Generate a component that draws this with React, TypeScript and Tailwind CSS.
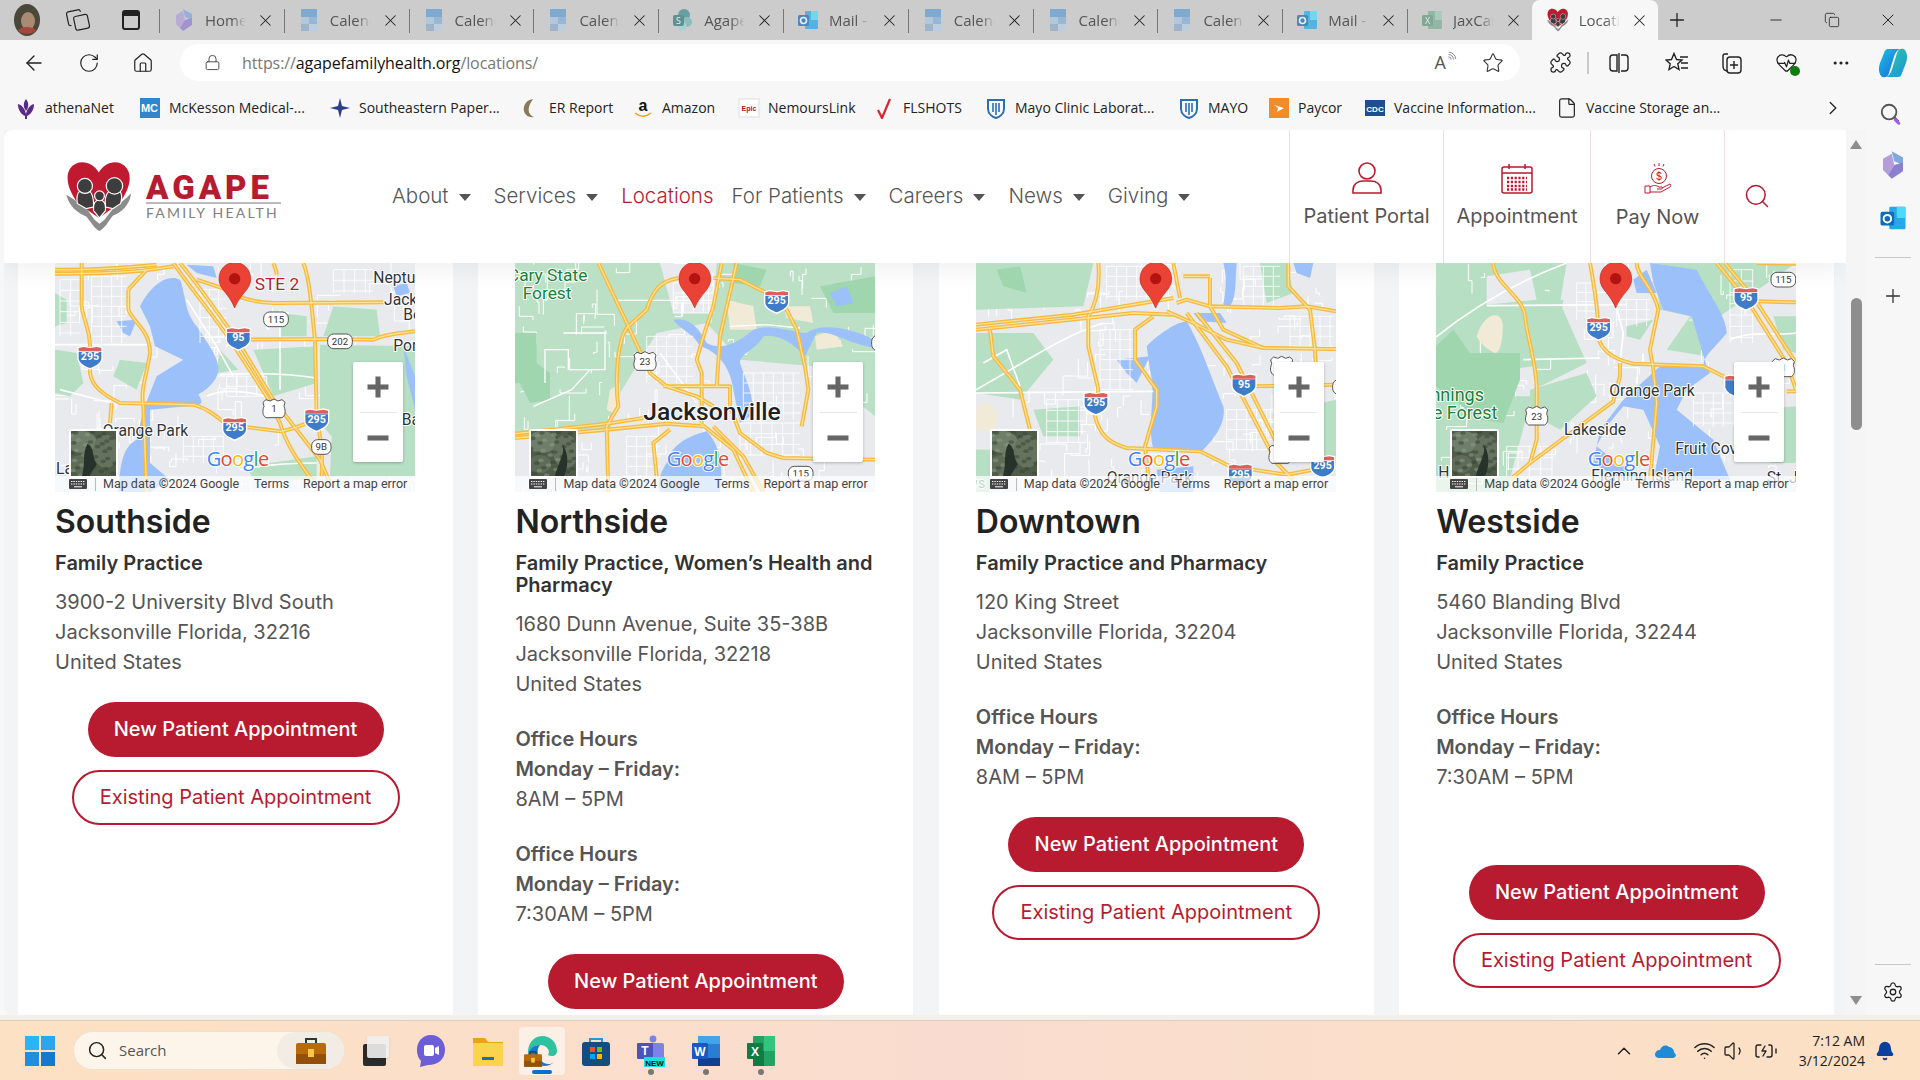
import {
  ArrowLeft,
  BatteryCharging,
  Bell,
  ChevronRight,
  ChevronUp,
  Copy,
  File,
  HeartPulse,
  Home,
  Lock,
  Minus,
  MoreHorizontal,
  Plus,
  Puzzle,
  RotateCw,
  Search,
  Settings,
  Star,
  Volume1,
  Wifi,
  X,
} from "lucide-react";

const RED = "#b81a30";

// --- browser chrome bits ---

function TabIcon({ kind }: { kind: string }) {
  if (kind === "calendar") {
    return (
      <svg width="20" height="24" viewBox="0 0 20 24">
        <rect x="2" y="1" width="16" height="8" fill="#5f9bd0" />
        <rect x="2" y="9" width="8" height="7" fill="#a9c6e0" />
        <rect x="10" y="9" width="8" height="7" fill="#7fb0d8" />
        <rect x="2" y="16" width="8" height="7" fill="#8fa9c8" />
        <rect x="10" y="16" width="8" height="7" fill="#b6d0e6" />
      </svg>
    );
  }
  if (kind === "copilot") {
    return (
      <svg width="20" height="24" viewBox="0 0 20 24">
        <path d="M9 1 L18 6 L18 12 L11 9Z" fill="#7fa8e0" />
        <path d="M2 7 L9 3 L11 12 L6 20 L2 16Z" fill="#b39ddb" />
        <path d="M11 12 L18 10 L18 17 L9 23 L6 20Z" fill="#8c7fd0" />
      </svg>
    );
  }
  if (kind === "sharepoint") {
    return (
      <svg width="22" height="24" viewBox="0 0 22 24">
        <circle cx="12" cy="7" r="6" fill="#3f8d8f" />
        <circle cx="15" cy="14" r="5" fill="#72b8b8" />
        <circle cx="10" cy="18" r="4.5" fill="#9ed3d2" />
        <rect x="1" y="7" width="11" height="11" rx="2" fill="#2d7a7c" />
        <text x="6.5" y="16" fontSize="9" fill="#fff" textAnchor="middle">S</text>
      </svg>
    );
  }
  if (kind === "mail") {
    return (
      <svg width="22" height="22" viewBox="0 0 22 22">
        <rect x="8" y="2" width="13" height="18" rx="1" fill="#28a8ea" />
        <rect x="14" y="2" width="7" height="9" fill="#50d9ff" />
        <rect x="1" y="6" width="11" height="11" rx="1.5" fill="#0f6cbd" />
        <circle cx="6.5" cy="11.5" r="3" fill="none" stroke="#fff" strokeWidth="1.6" />
      </svg>
    );
  }
  if (kind === "excel") {
    return (
      <svg width="22" height="22" viewBox="0 0 22 22" opacity="0.75">
        <rect x="7" y="2" width="14" height="18" rx="1" fill="#5fa584" />
        <rect x="14" y="2" width="7" height="9" fill="#8fc9a9" />
        <rect x="1" y="6" width="11" height="11" rx="1.5" fill="#3d8a65" />
        <text x="6.5" y="15" fontSize="9" fill="#fff" textAnchor="middle">X</text>
      </svg>
    );
  }
  return (
    <svg width="22" height="24" viewBox="50 60 200 220">
      <HeartMark />
    </svg>
  );
}

function HeartMark() {
  return (
    <>
      <path
        d="M148,98 C130,65 85,55 62,85 C45,110 55,150 85,190 L148,235 L210,190 C240,150 250,110 232,85 C210,55 165,65 148,98Z"
        fill="#c01a30"
      />
      <path d="M50,165 C72,178 92,192 112,208 L135,240 L150,252 L165,240 L190,208 C208,192 230,178 245,160 C242,195 216,218 190,228 C176,246 166,266 150,274 C134,266 124,246 110,230 C84,220 58,200 50,165Z" fill="#8b8b8b" />
      <g stroke="#fff" strokeWidth="7" fill="#3d3d3d" paintOrder="stroke">
        <path d="M85,190 C80,165 90,150 105,150 C122,150 132,168 130,200 L110,205Z" />
        <path d="M170,200 C165,168 178,150 195,150 C212,150 220,165 212,190 L190,205Z" />
        <circle cx="106" cy="138" r="21" />
        <circle cx="195" cy="138" r="23" />
        <path d="M134,212 C132,190 140,182 150,182 C160,182 168,190 166,212 L150,232Z" />
        <circle cx="150" cy="168" r="13" />
      </g>
    </>
  );
}

function BrowserTab({ label, kind, active }: { label: string; kind: string; active?: boolean }) {
  return (
    <div
      className={
        active
          ? "flex items-center h-[40px] w-[126px] pl-[15px] bg-[#f7f7f7] rounded-t-[8px]"
          : "flex items-center h-[40px] w-[124.8px] pl-[14px] relative"
      }
    >
      {!active && <span className="absolute left-0 top-[9px] h-[24px] w-px bg-[#777]" />}
      <span className={active ? "w-[22px] flex justify-center" : "w-[22px] flex justify-center opacity-70"}>
        <TabIcon kind={kind} />
      </span>
      <span className="ml-[10px] w-[41px] overflow-hidden whitespace-nowrap text-[15px] text-[#555] [mask-image:linear-gradient(to_right,black_65%,transparent)]">
        {label}
      </span>
      <X size={19} strokeWidth={1.3} className="ml-[10px] text-[#222] shrink-0" />
    </div>
  );
}

function TabBar() {
  const tabs = [
    ["Home", "copilot"],
    ["Calendar", "calendar"],
    ["Calendar", "calendar"],
    ["Calendar", "calendar"],
    ["Agape Family", "sharepoint"],
    ["Mail - Front", "mail"],
    ["Calendar", "calendar"],
    ["Calendar", "calendar"],
    ["Calendar", "calendar"],
    ["Mail - Front", "mail"],
    ["JaxCare", "excel"],
  ];
  return (
    <div className="flex items-center h-[40px] bg-[#cccccc] shrink-0">
      <div className="flex items-center w-[159px] pl-[14px]">
        <svg width="26" height="32" viewBox="0 0 26 32" className="shrink-0">
          <ellipse cx="13" cy="16" rx="13" ry="16" fill="#4a4838" />
          <ellipse cx="14" cy="17" rx="7" ry="9" fill="#a98a72" />
          <path d="M4 26 C8 22 18 22 22 26 C20 31 6 31 4 26Z" fill="#a5463f" />
        </svg>
        <Copy size={24} strokeWidth={1.2} className="ml-[26px] text-[#222] -rotate-12" />
        <div className="ml-[32px] w-[18px] h-[20px] rounded-[3px] border-2 border-[#222] border-t-[6px]" />
      </div>
      {tabs.map((t, i) => (
        <BrowserTab key={i} label={t[0]} kind={t[1]} />
      ))}
      <BrowserTab label="Locations" kind="heart" active />
      <Plus size={22} strokeWidth={1.4} className="ml-[8px] text-[#222]" />
      <Minus size={18} strokeWidth={1.2} className="ml-[79px] text-[#222]" />
      <Copy size={16} strokeWidth={1.2} className="ml-[39px] text-[#222]" />
      <X size={20} strokeWidth={1.2} className="ml-[38px] text-[#222]" />
    </div>
  );
}

function ToolbarSlot({ w, children }: { w: string; children: React.ReactNode }) {
  return <div className={`flex justify-center ${w}`}>{children}</div>;
}

function Toolbar() {
  return (
    <div className="flex items-center h-[45px] bg-[#f7f7f7] shrink-0">
      <div className="flex items-center w-[180px] pl-[22px] gap-[32px] text-[#222]">
        <ArrowLeft size={24} strokeWidth={1.4} />
        <RotateCw size={22} strokeWidth={1.3} />
        <Home size={22} strokeWidth={1.3} />
      </div>
      <div className="flex items-center w-[1340px] h-[37px] rounded-full bg-white">
        <Lock size={17} strokeWidth={1.3} className="ml-[24px] text-[#444]" />
        <span className="ml-[21px] text-[16px] font-['Open_Sans',sans-serif] tracking-[-0.1px]">
          <span className="text-[#777]">https://</span>
          <span className="text-[#111]">agapefamilyhealth.org</span>
          <span className="text-[#777]">/locations/</span>
        </span>
        <span className="ml-auto text-[18px] text-[#555] font-['Open_Sans',sans-serif]">A</span>
        <Wifi size={11} strokeWidth={1.4} className="rotate-45 -mt-[12px] text-[#555]" />
        <Star size={22} strokeWidth={1.2} className="ml-[25px] mr-[16px] text-[#333]" />
      </div>
      <div className="flex items-center ml-[13px] text-[#222]">
        <ToolbarSlot w="w-[54px]">
          <Puzzle size={23} strokeWidth={1.3} />
        </ToolbarSlot>
        <span className="w-[2px] h-[22px] bg-[#c9c9c9]" />
        <ToolbarSlot w="w-[60px]">
          <svg width="22" height="22" viewBox="0 0 22 22" fill="none" stroke="#222" strokeWidth="1.4">
            <path d="M9 3 H5 a3 3 0 0 0 -3 3 V16 a3 3 0 0 0 3 3 H9Z M13 3 H17 a3 3 0 0 1 3 3 V16 a3 3 0 0 1 -3 3 H13 M11 1 V21" />
          </svg>
        </ToolbarSlot>
        <ToolbarSlot w="w-[55px]">
          <svg width="24" height="22" viewBox="0 0 24 22" fill="none" stroke="#222" strokeWidth="1.4">
            <path d="M9 1.5 L11.5 7.5 L17 8 L12.8 11.8 L14 17.5 L9 14.5 L4 17.5 L5.2 11.8 L1 8 L6.5 7.5Z" />
            <path d="M15 5 H23 M16 11 H23 M16 16 H23" />
          </svg>
        </ToolbarSlot>
        <ToolbarSlot w="w-[55px]">
          <svg width="24" height="24" viewBox="0 0 24 24" fill="none" stroke="#222" strokeWidth="1.4">
            <path d="M8 3 H5 a2 2 0 0 0 -2 2 V15 a5 5 0 0 0 4 5" />
            <rect x="7" y="6" width="14" height="16" rx="3" />
            <path d="M14 10 V18 M10 14 H18" />
          </svg>
        </ToolbarSlot>
        <ToolbarSlot w="w-[55px]">
          <div className="relative">
            <HeartPulse size={23} strokeWidth={1.3} />
            <span className="absolute -right-[2px] -bottom-[2px] w-[10px] h-[10px] rounded-full bg-[#107c10]" />
          </div>
        </ToolbarSlot>
        <ToolbarSlot w="w-[53px]">
          <MoreHorizontal size={20} strokeWidth={1.8} />
        </ToolbarSlot>
        <ToolbarSlot w="w-[52px]">
          <svg width="32" height="32" viewBox="0 0 32 32">
            <defs>
              <linearGradient id="cop-a" x1="0" y1="0" x2="1" y2="1">
                <stop offset="0" stopColor="#19c3e6" />
                <stop offset="1" stopColor="#1b5fd6" />
              </linearGradient>
              <linearGradient id="cop-b" x1="0" y1="0" x2="1" y2="1">
                <stop offset="0" stopColor="#2fd29b" />
                <stop offset="1" stopColor="#1b8fe0" />
              </linearGradient>
            </defs>
            <path d="M11 2 H24 C20 2 18 6 16 13 L12 26 C11 30 8 31 5 30 C2 27 1 22 3 16 L7 6 C8 3 9 2 11 2Z" fill="url(#cop-a)" />
            <path d="M21 30 H8 C12 30 14 26 16 19 L20 6 C21 2 24 1 27 2 C30 5 31 10 29 16 L25 26 C24 29 23 30 21 30Z" fill="url(#cop-b)" />
          </svg>
        </ToolbarSlot>
      </div>
    </div>
  );
}

function Bookmarks() {
  const icon = (n: string) => {
    switch (n) {
      case "athena":
        return <path d="M11 2 C8 6 8 10 11 14 C14 10 14 6 11 2Z M3 7 C3 13 6 17 10 19 L10 22 H12 L12 19 C16 17 19 13 19 7 C15 8 12 12 11 17 C10 12 7 8 3 7Z" fill="#5b2a86" />;
      case "mc":
        return (
          <>
            <rect x="1" y="1" width="20" height="20" fill="#2f86cf" />
            <text x="10.5" y="15" fontSize="11" fontWeight="700" fill="#fff" textAnchor="middle">MC</text>
          </>
        );
      case "se":
        return <path d="M11 1 L13 9 L21 11 L13 13 L11 21 L9 13 L1 11 L9 9Z" fill="#2c3e8c" />;
      case "er":
        return <path d="M14 2 C6 3 4 10 5 14 C6 18 10 21 15 20 C10 18 9 14 10 10 C11 6 13 4 14 2Z" fill="#8a7a55" />;
      case "az":
        return (
          <>
            <text x="11" y="14" fontSize="16" fontWeight="700" fill="#111" textAnchor="middle">a</text>
            <path d="M3 16 C8 20 14 20 19 16" stroke="#f39c12" strokeWidth="1.6" fill="none" />
          </>
        );
      case "epic":
        return (
          <>
            <rect x="1" y="2" width="20" height="18" fill="#fff" stroke="#ddd" />
            <text x="11" y="14" fontSize="7" fontWeight="700" fill="#b5121b" textAnchor="middle">Epic</text>
          </>
        );
      case "fl":
        return <path d="M17 2 L9 21 L5 13" fill="none" stroke="#d9232e" strokeWidth="2.2" />;
      case "mayo":
        return (
          <>
            <path d="M3 3 H19 V12 C19 17 14 20 11 21 C8 20 3 17 3 12Z" fill="none" stroke="#2a6fb5" strokeWidth="2" />
            <path d="M8 6 V15 M11 6 V18 M14 6 V15" stroke="#2a6fb5" strokeWidth="1.6" />
          </>
        );
      case "paycor":
        return (
          <>
            <rect x="1" y="1" width="20" height="20" fill="#f28c28" />
            <path d="M6 8 L16 11 L9 15 L10 11Z" fill="#fff" />
          </>
        );
      default:
        return (
          <>
            <rect x="1" y="3" width="20" height="16" fill="#1b4f91" />
            <text x="11" y="14.5" fontSize="8" fontWeight="700" fill="#fff" textAnchor="middle">CDC</text>
          </>
        );
    }
  };
  const items: [string, string, string][] = [
    ["athena", "athenaNet", "w-[124px]"],
    ["mc", "McKesson Medical-...", "w-[190px]"],
    ["se", "Southeastern Paper...", "w-[190px]"],
    ["er", "ER Report", "w-[113px]"],
    ["az", "Amazon", "w-[106px]"],
    ["epic", "NemoursLink", "w-[135px]"],
    ["fl", "FLSHOTS", "w-[112px]"],
    ["mayo", "Mayo Clinic Laborat...", "w-[193px]"],
    ["mayo", "MAYO", "w-[90px]"],
    ["paycor", "Paycor", "w-[96px]"],
    ["cdc", "Vaccine Information...", "w-[192px]"],
  ];
  return (
    <div className="flex items-center h-[45px] pl-[15px] bg-[#f7f7f7] shrink-0 text-[14px] text-[#222] font-['Open_Sans',sans-serif]">
      {items.map(([k, label, w], i) => (
        <div key={i} className={`flex items-center gap-[8px] whitespace-nowrap ${w}`}>
          <svg width="22" height="22" viewBox="0 0 22 22" className="shrink-0 font-['Liberation_Sans',sans-serif]">
            {icon(k)}
          </svg>
          <span>{label}</span>
        </div>
      ))}
      <div className="flex items-center gap-[8px] whitespace-nowrap w-[266px]">
        <File size={22} strokeWidth={1.3} className="shrink-0" />
        <span>Vaccine Storage an...</span>
      </div>
      <ChevronRight size={22} strokeWidth={1.4} />
      <div className="ml-[35px] mt-[10px] relative">
        <Search size={22} strokeWidth={2} className="text-[#555]" />
        <span className="absolute right-0 bottom-[1px] w-[8px] h-[3px] rotate-45 rounded-full bg-[#a855f7]" />
      </div>
    </div>
  );
}

// --- map drawings, coordinates are in a 3x space to match the source crops ---

function grid(x1: number, y1: number, x2: number, y2: number, step: number) {
  let d = "";
  for (let x = x1; x <= x2; x += step) d += `M${x},${y1}V${y2}`;
  for (let y = y1; y <= y2; y += step) d += `M${x1},${y}H${x2}`;
  return d;
}

// small stable pseudo random walk of side streets, gives the map its texture
function scatter(seed: number, x0: number, count: number) {
  let s = seed;
  const next = (n: number) => {
    s = (s * 1103515245 + 12345) & 0x7fffffff;
    return (s >> 8) % n;
  };
  let d = "";
  for (let i = 0; i < count; i++) {
    let x = x0 + next(1080);
    let y = 40 + next(687);
    d += `M${x},${y}`;
    for (let k = 0; k < 3; k++) {
      x += next(90) - 45;
      y += next(90) - 45;
      d += k % 2 ? `H${x}` : `V${y}`;
    }
  }
  return d;
}

function Streets({ seed, x0, count = 110 }: { seed: number; x0: number; count?: number }) {
  return <path d={scatter(seed, x0, count)} stroke="#fff" strokeWidth="3" fill="none" />;
}

function Interstate({ x, y, n }: { x: number; y: number; n: string }) {
  return (
    <g transform={`translate(${x} ${y})`}>
      <path d="M-38,-30 L-20,-34 L0,-30 L20,-34 L38,-30 L38,5 C36,24 14,32 0,38 C-14,32 -36,24 -38,5Z" fill="#fff" />
      <path d="M-34,-16 H34 V5 C32,20 12,28 0,33 C-12,28 -32,20 -34,5Z" fill="#3e7bc9" />
      <path d="M-34,-27 L-20,-30 L0,-27 L20,-30 L34,-27 V-18 H-34Z" fill="#d9605b" />
      <text y="9" textAnchor="middle" fontSize="32" fontWeight="700" fill="#fff">{n}</text>
    </g>
  );
}

function Oval({ x, y, n, w }: { x: number; y: number; n: string; w: number }) {
  return (
    <g transform={`translate(${x} ${y})`}>
      <rect x={-w / 2} y="-22" width={w} height="44" rx="18" fill="#fff" stroke="#555" strokeWidth="3" />
      <text y="10" textAnchor="middle" fontSize="29" fill="#333">{n}</text>
    </g>
  );
}

function UsShield({ x, y, n }: { x: number; y: number; n: string }) {
  return (
    <g transform={`translate(${x} ${y})`}>
      <path d="M-24,-28 L-12,-24 L0,-30 L12,-24 L24,-28 L33,-20 L30,-8 C36,8 34,20 24,26 L-24,26 C-34,20 -36,8 -30,-8 L-33,-20Z" fill="#fff" stroke="#555" strokeWidth="3" />
      <text y="10" textAnchor="middle" fontSize="29" fill="#333">{n}</text>
    </g>
  );
}

function MapLabel({
  x,
  y,
  t,
  size = 47,
  fill = "#2f3437",
  weight = 400,
  anchor = "start",
}: {
  x: number;
  y: number;
  t: string;
  size?: number;
  fill?: string;
  weight?: number;
  anchor?: "start" | "end";
}) {
  return (
    <text x={x} y={y} fontSize={size} fill={fill} fontWeight={weight} textAnchor={anchor} stroke="#fff" strokeWidth="6" paintOrder="stroke" strokeLinejoin="round">
      {t}
    </text>
  );
}

function GoogleMark({ x }: { x: number }) {
  return (
    <text x={x} y="650" fontSize="60" stroke="#fff" strokeWidth="6" paintOrder="stroke" fontFamily="'Open Sans', sans-serif" letterSpacing="-2">
      <tspan fill="#4285f4">G</tspan>
      <tspan fill="#ea4335">o</tspan>
      <tspan fill="#fbbc05">o</tspan>
      <tspan fill="#4285f4">g</tspan>
      <tspan fill="#34a853">l</tspan>
      <tspan fill="#ea4335">e</tspan>
    </text>
  );
}

function Satellite({ variant }: { variant: number }) {
  const blobs = Array.from({ length: 36 }, (_, i) => ({
    x: (i * 17 + variant * 7) % 49,
    y: (i * 29 + 5) % 49,
    light: i % 3 === 0,
  }));
  return (
    <svg viewBox="0 0 49 49" className="w-full h-full block">
      <rect width="49" height="49" fill="#4f5c48" />
      <ellipse cx="12" cy="12" rx="16" ry="12" fill="#6f7e68" />
      <ellipse cx="38" cy="22" rx="14" ry="18" fill="#65735e" />
      <ellipse cx="10" cy="36" rx="12" ry="10" fill="#5e6c57" />
      {blobs.map((b, i) => (
        <ellipse key={i} cx={b.x} cy={b.y} rx="3" ry="2" fill={b.light ? "#8b9a84" : "#39453a"} opacity="0.55" />
      ))}
      {variant === 0 ? (
        <path d="M18 14 C26 18 22 28 28 36 L20 49 L12 49 C16 36 12 24 18 14Z" fill="#27322a" />
      ) : (
        <path d="M34 14 C38 24 30 34 26 49 L36 49 C42 36 40 22 34 14Z" fill="#27322a" />
      )}
    </svg>
  );
}

type MapProps = {
  origin: number;
  base?: string;
  thumb: number;
  children: React.ReactNode;
};

function MapShell({ origin, base = "#e8eaed", thumb, children }: MapProps) {
  return (
    <div className="relative z-20 h-[229px] w-[360px] overflow-hidden font-['Roboto',sans-serif]">
      <svg viewBox={`${origin} 40 1080 687`} className="absolute inset-0 w-[360px] h-[229px]" fontFamily="Roboto, sans-serif">
        <rect x={origin} y="40" width="1080" height="687" fill={base} />
        {children}
        <path
          d={`M${origin + 539},175 C${origin + 522},130 ${origin + 492},120 ${origin + 492},88 C${origin + 492},60 ${origin + 512},38 ${origin + 539},38 C${origin + 566},38 ${origin + 587},60 ${origin + 587},88 C${origin + 587},120 ${origin + 557},130 ${origin + 539},175Z`}
          fill="#ea4335"
          stroke="#c5221f"
          strokeWidth="2"
        />
        <circle cx={origin + 539} cy="87" r="17" fill="#b31412" />
      </svg>

      <div className="absolute left-[14px] top-[166px] w-[49px] h-[49px] border-2 border-white rounded-[2px] overflow-hidden">
        <Satellite variant={thumb} />
      </div>

      <div className="absolute left-[298px] top-[99px] w-[50px] h-[100px] bg-white rounded-[2px] shadow-[0_1px_3px_rgba(0,0,0,0.25)] flex flex-col items-center text-[#666]">
        <div className="h-[50px] flex items-center justify-center">
          <Plus size={36} strokeWidth={3.4} strokeLinecap="butt" />
        </div>
        <span className="w-[37px] h-px bg-[#e6e6e6]" />
        <div className="h-[49px] flex items-center justify-center">
          <Minus size={36} strokeWidth={3.4} strokeLinecap="butt" />
        </div>
      </div>

      <div className="absolute left-0 right-0 bottom-0 h-[16px] bg-white/70 flex items-center pl-[14px] text-[12.5px] text-[#444] whitespace-nowrap">
        <svg width="18" height="10" viewBox="0 0 18 10" className="shrink-0">
          <rect width="18" height="10" rx="1" fill="#444" />
          <path d="M2 2.5H16M2 5H16" stroke="#fff" strokeWidth="1" strokeDasharray="1.4 1" />
          <path d="M5 7.8H13" stroke="#fff" strokeWidth="1" />
        </svg>
        <span className="ml-[8px] w-px h-[13px] bg-[#bbb]" />
        <span className="ml-[7px] w-[151px]">Map data ©2024 Google</span>
        <span className="w-[49px]">Terms</span>
        <span>Report a map error</span>
      </div>
    </div>
  );
}

function Highways({ paths }: { paths: string[] }) {
  return (
    <g fill="none" strokeLinejoin="round">
      {paths.map((d, i) => (
        <path key={`o${i}`} d={d} stroke="#f7b93e" strokeWidth="12" />
      ))}
      {paths.map((d, i) => (
        <path key={`i${i}`} d={d} stroke="#fde293" strokeWidth="4" />
      ))}
    </g>
  );
}

const PARK = "#b7dfc3";
const WATER = "#9cc0f9";
const SAND = "#f0ead6";

function SouthsideMap() {
  return (
    <MapShell origin={45} thumb={0}>
      <Streets seed={11} x0={45} />
      <g fill={PARK}>
        <path d="M840,285 L1125,290 L1125,680 L870,680 L875,560 L840,520Z" />
        <path d="M45,300 L110,310 L130,400 L90,440 L45,430Z" />
        <path d="M640,300 L820,290 L830,400 L700,440Z" />
        <path d="M240,330 L320,340 L290,420 L220,380Z" />
        <path d="M880,170 L1010,180 L1020,260 L850,260Z" />
        <path d="M720,190 L800,200 L800,260 L720,260Z" />
        <path d="M620,650 L830,620 L830,690 L640,690Z" />
        <path d="M45,130 L80,150 L80,220 L45,230Z" />
        <path d="M540,300 L595,360 L530,370Z" />
      </g>
      <g fill={WATER}>
        <path d="M300,170 C330,110 380,70 420,90 C440,140 430,180 470,230 C510,290 530,320 535,350 C540,390 500,420 475,435 C500,470 470,465 440,470 L330,480 C330,540 330,570 330,640 L390,690 L330,727 L235,727 C240,640 250,590 290,570 L310,480 L350,380 L430,330 L345,290 L330,230Z" />
        <path d="M440,45 L520,50 L530,85 L470,70Z" />
        <path d="M230,215 L290,210 L270,260 L250,250Z" />
        <path d="M1090,290 L1125,380 L1125,480 L1100,380Z" />
        <path d="M1060,110 L1100,100 L1110,130 L1070,140Z" />
      </g>
      <path d={`${grid(155, 80, 260, 280, 30)}${grid(480, 120, 560, 280, 28)}${grid(560, 380, 680, 440, 30)}${grid(430, 560, 550, 640, 30)}${grid(880, 60, 1000, 130, 32)}${grid(60, 90, 120, 260, 32)}`} stroke="#fff" strokeWidth="2.5" fill="none" />
      <path d="M45,285 H330 M540,375 C640,370 740,370 830,385 M60,420 L215,460 M500,440 C540,420 600,420 680,440 M720,180 V420 M440,150 L530,290 L580,380 M600,660 C700,640 800,640 830,640" stroke="#fff" strokeWidth="5" fill="none" />
      <Highways
        paths={[
          "M45,72 C120,72 250,70 330,60 L400,50",
          "M45,60 C130,62 250,55 350,45",
          "M125,40 L125,170 C130,210 150,240 150,290 L150,370 C155,410 190,435 240,460 L460,465 C500,475 530,500 560,525 L720,545 C760,540 790,525 825,510",
          "M420,40 C470,100 520,170 590,270 L700,450 L840,630 L870,700",
          "M400,40 C440,100 500,170 570,270 L680,440 L720,520 C740,590 780,640 815,690",
          "M470,90 L560,120 C600,150 650,158 700,160 L1030,158",
          "M790,40 C810,90 815,180 825,270 L830,510 C840,550 850,600 845,680",
          "M620,270 L860,268 L1000,270 C1040,250 1100,250 1125,245",
          "M265,120 L265,180 C280,220 330,240 330,310 C320,380 300,420 310,470 L320,727",
          "M320,60 L265,120",
          "M215,460 L210,520",
          "M700,40 C705,55 710,60 710,75",
        ]}
      />
      <Interstate x={150} y={322} n="295" />
      <Interstate x={595} y={266} n="95" />
      <Interstate x={584} y={536} n="295" />
      <Interstate x={830} y={510} n="295" />
      <Oval x={708} y={209} n="115" w={74} />
      <Oval x={900} y={275} n="202" w={74} />
      <Oval x={844} y={592} n="9B" w={58} />
      <UsShield x={702} y={478} n="1" />
      <MapLabel x={644} y={120} t="STE 2" size={52} fill="#b3202c" />
      <MapLabel x={1000} y={100} t="Neptune" />
      <MapLabel x={1032} y={165} t="Jack" />
      <MapLabel x={1090} y={210} t="Beach" />
      <MapLabel x={1060} y={305} t="Port" />
      <MapLabel x={1085} y={525} t="Bal" />
      <MapLabel x={188} y={560} t="Orange Park" />
      <MapLabel x={48} y={672} t="Lake" />
      <GoogleMark x={500} />
    </MapShell>
  );
}

function NorthsideMap() {
  return (
    <MapShell origin={45} base="#bbe0c6" thumb={1}>
      <g fill="#e8eaed">
        <path d="M360,430 L470,250 L620,220 L720,330 L940,350 L1125,500 L1125,727 L45,727 L45,560 L330,540Z" />
        <path d="M480,40 L650,40 L640,190 L520,190Z" />
      </g>
      <Streets seed={23} x0={45} count={90} />
      <g fill="#9fd6ae">
        <path d="M45,250 L110,250 L110,340 L150,370 L150,450 L90,460 L60,400 L45,400Z" />
        <path d="M700,40 L800,60 L780,110 L700,100Z" />
        <path d="M960,110 L1125,80 L1125,190 L1000,190Z" />
      </g>
      <g fill={SAND}>
        <path d="M680,150 L760,170 L770,240 L690,240Z" />
        <path d="M850,170 L930,170 L940,220 L860,205Z" />
        <path d="M945,260 L1000,240 L1030,290 L950,300Z" />
        <path d="M330,420 L360,400 L360,500 L320,480Z" />
      </g>
      <g fill={WATER}>
        <path d="M520,210 C570,200 600,240 620,280 C660,300 700,290 760,240 C820,220 880,250 920,250 C960,220 1040,230 1125,270 L1125,295 C1040,280 990,240 950,250 L915,320 C880,280 830,250 790,260 C770,300 720,310 720,340 C740,400 770,450 750,500 L720,520 L700,420 C690,340 640,300 600,290 C580,250 540,240 520,210Z" />
        <path d="M500,640 C510,590 560,560 620,545 C660,590 670,640 660,727 L480,727 C470,700 480,670 500,640Z" />
        <path d="M990,130 L1040,110 L1060,160 L1010,170Z" />
      </g>
      <path d={`${grid(440, 260, 580, 400, 30)}${grid(730, 370, 900, 510, 30)}${grid(380, 560, 480, 680, 30)}${grid(720, 520, 900, 620, 32)}${grid(520, 100, 640, 190, 30)}`} stroke="#fff" strokeWidth="2.5" fill="none" />
      <path d="M350,152 H640 M690,230 L800,225 L900,235 M190,250 H315 V360 H205 L205,300 H135 V400 M100,470 L215,420 L270,360 M480,310 L590,460" stroke="#fff" strokeWidth="4" fill="none" />
      <Highways
        paths={[
          "M45,552 L320,522 L430,505",
          "M45,565 L320,540 L500,522 L610,530",
          "M295,40 L385,230 L450,370 L500,410 L590,440 L640,470",
          "M535,85 C480,95 460,120 440,180 L380,235 C350,280 345,400 355,470 L320,530 L325,727",
          "M640,85 L720,90 L800,130 L860,180 L890,240 L915,350 L925,420 L905,530",
          "M665,40 L640,170 L610,260 L590,330 L605,370 L605,520",
          "M710,40 L660,260 L650,410",
          "M490,410 L690,410 L690,470 L720,550 L800,610 L850,625 L1125,630",
          "M600,520 L700,600 L760,727",
          "M510,540 L460,580 L470,680",
          "M640,530 L730,620 L790,727",
        ]}
      />
      <Interstate x={830} y={155} n="295" />
      <UsShield x={435} y={336} n="23" />
      <Oval x={902} y={672} n="115" w={74} />
      <Oval x={1130} y={280} n="1" w={30} />
      <MapLabel x={262} y={95} t="Cary State" size={52} fill="#188038" anchor="end" />
      <MapLabel x={68} y={149} t="Forest" size={52} fill="#188038" />
      <MapLabel x={430} y={512} t="Jacksonville" size={74} fill="#202124" weight={500} />
      <GoogleMark x={500} />
    </MapShell>
  );
}

function DowntownMap() {
  return (
    <MapShell origin={48} thumb={0}>
      <Streets seed={37} x0={48} />
      <g fill={PARK}>
        <path d="M48,40 L400,40 L370,170 L48,180Z" />
        <path d="M48,250 L220,250 L280,330 L180,450 L48,430Z" />
        <path d="M220,480 L360,470 L360,560 L250,560Z" />
        <path d="M1000,480 L1128,450 L1128,640 L1050,640Z" />
        <path d="M48,600 L90,600 L90,727 L48,727Z" />
        <path d="M900,40 L980,40 L1000,130 L920,160Z" />
        <path d="M610,430 L640,430 L620,470Z" />
      </g>
      <path d="M110,60 L180,50 L200,130 L130,110Z" fill="#9fd6ae" />
      <path d="M48,480 C60,460 80,450 100,470 C120,510 110,540 90,545 L48,540Z" fill={SAND} />
      <g fill={WATER}>
        <path d="M560,290 C590,260 640,220 680,215 C720,280 760,400 790,470 C800,520 760,570 730,600 L700,610 L580,597 C560,520 590,440 570,360Z" />
        <path d="M590,660 L700,650 L700,727 L600,727Z" />
        <path d="M790,40 L830,40 C825,100 830,140 810,170 L790,165 C800,110 800,80 790,40Z" />
        <path d="M700,190 L780,190 L800,220 L720,215Z" />
        <path d="M1000,40 L1060,40 L1050,85 L1010,70Z" />
        <path d="M470,330 L570,320 L530,400 L500,370Z" />
      </g>
      <path d={`${grid(440, 50, 640, 150, 30)}${grid(850, 50, 960, 170, 30)}${grid(420, 240, 520, 420, 30)}${grid(260, 450, 380, 580, 32)}${grid(800, 480, 950, 600, 30)}${grid(990, 200, 1120, 290, 30)}`} stroke="#fff" strokeWidth="2.5" fill="none" />
      <path d="M48,430 L580,425 M48,420 C160,360 300,260 430,220 M70,340 L140,300 L180,410 M880,510 L960,520" stroke="#fff" strokeWidth="5" fill="none" />
      <Highways
        paths={[
          "M48,225 L340,195 L640,145",
          "M48,240 L380,205 L520,190 L640,195",
          "M415,40 C420,100 410,160 385,200 L385,290 L415,420 L405,500 C420,560 450,580 500,595 L720,605 L810,650 L980,675 L1060,660",
          "M650,160 L680,150 L750,170 L960,175 L1040,170 L1128,185",
          "M985,40 L985,110 L1050,180 L1065,300 L1070,400 L1090,660",
          "M620,185 L700,220 L800,270 L910,295 L1128,298",
          "M680,190 L800,350 L950,640 L1000,690",
          "M710,190 L830,340 L980,640",
          "M90,240 L100,320 L180,420 L210,540",
          "M580,200 L525,240 L525,330 L590,420 L590,470 L555,590 L570,727",
          "M750,170 L790,240 L910,295",
          "M880,410 L1128,405",
          "M640,40 L660,145 M750,85 L750,170 M670,80 H750",
        ]}
      />
      <Interstate x={408} y={460} n="295" />
      <Interstate x={852} y={405} n="95" />
      <Interstate x={841} y={675} n="295" />
      <Interstate x={1088} y={650} n="295" />
      <UsShield x={965} y={350} n="1" />
      <UsShield x={960} y={615} n="1" />
      <Oval x={1135} y={412} n="2" w={34} />
      <MapLabel x={440} y={700} t="Orange Park" />
      <MapLabel x={20} y={716} t="ws" size={44} fill="#188038" />
      <GoogleMark x={503} />
    </MapShell>
  );
}

function WestsideMap() {
  return (
    <MapShell origin={48} base="#b7dfc3" thumb={1}>
      <g fill="#e8eaed">
        <path d="M440,40 L700,40 L720,180 L810,200 L740,300 L860,320 L900,200 L1128,40 L1128,727 L260,727 L340,420 L500,340 L420,160Z" />
        <path d="M200,80 L330,60 L350,150 L200,165Z" />
        <path d="M260,360 L340,350 L350,440 L290,440Z" />
      </g>
      <Streets seed={53} x0={48} count={70} />
      <g fill="#9fd6ae">
        <path d="M48,290 L100,240 L150,310 L300,310 L300,390 L250,520 L180,510 L48,410Z" />
      </g>
      <g fill={PARK}>
        <path d="M370,160 L430,150 L420,220 L370,210Z" />
        <path d="M620,230 L700,210 L660,270 L620,260Z" />
        <path d="M330,420 L500,370 L530,440 L420,540 L330,490Z" />
        <path d="M1060,200 L1128,200 L1128,310 L1090,300Z" />
        <path d="M960,480 L1128,470 L1128,640 L1050,640Z" />
      </g>
      <path d="M170,260 C190,190 240,180 248,220 C250,270 240,310 225,310 C200,300 180,280 170,260Z" fill={SAND} />
      <g fill={WATER}>
        <path d="M690,40 L830,60 C870,140 920,200 920,250 C880,300 860,310 850,340 L870,370 L800,420 L770,480 L880,570 L930,690 L700,690 L720,590 L670,480 L610,470 L560,530 L530,590 L590,640 L690,690 L600,690 L520,640 L540,540 L610,450 L720,350 L860,350 L815,200 L730,180 L700,100Z" />
        <path d="M640,90 L680,60 L710,130 L650,130Z" />
      </g>
      <path d={`${grid(470, 100, 530, 210, 28)}${grid(590, 150, 690, 230, 30)}${grid(930, 60, 1000, 280, 34)}${grid(820, 430, 950, 530, 30)}${grid(260, 590, 400, 680, 34)}`} stroke="#fff" strokeWidth="2.5" fill="none" />
      <path d="M48,262 C150,180 280,100 440,40 M200,168 L620,165 M590,175 L610,250 L600,340 M930,270 C1000,240 1060,260 1128,250 M310,330 L540,325" stroke="#fff" strokeWidth="5" fill="none" />
      <Highways
        paths={[
          "M220,40 C220,100 310,140 315,200 C320,260 350,340 350,420 L350,570 L330,640 L270,690",
          "M510,40 C520,100 535,160 535,260 C540,300 580,330 640,342 L850,350 L940,395",
          "M650,40 C650,80 700,110 715,180 L690,300 L700,360 L710,460 L690,690",
          "M600,340 L600,380 L580,455 L330,640",
          "M890,40 L980,150 L1100,340 L1128,420",
          "M915,40 L1005,150 L1128,340",
          "M1010,155 L1128,158",
          "M1010,40 L1128,42",
          "M1100,425 L1128,425",
        ]}
      />
      <Interstate x={536} y={236} n="295" />
      <Interstate x={978} y={146} n="95" />
      <Interstate x={950} y={408} n="" />
      <Oval x={1090} y={90} n="115" w={74} />
      <UsShield x={350} y={500} n="23" />
      <UsShield x={1090} y={355} n="1" />
      <MapLabel x={192} y={455} t="Jennings" size={54} fill="#188038" anchor="end" />
      <MapLabel x={232} y={507} t="State Forest" size={54} fill="#188038" anchor="end" />
      <MapLabel x={568} y={440} t="Orange Park" />
      <MapLabel x={432} y={555} t="Lakeside" />
      <MapLabel x={766} y={612} t="Fruit Cove" />
      <MapLabel x={514} y={695} t="Fleming Island" />
      <MapLabel x={55} y={685} t="Hi" />
      <MapLabel x={1040} y={700} t="St. Jo" />
      <GoogleMark x={503} />
    </MapShell>
  );
}

// --- page content ---

function Hours({ title, days, time }: { title: string; days: string; time: string }) {
  return (
    <div className="mt-[25px] text-[20px] leading-[30px] text-[#555]">
      <p className="font-semibold">{title}</p>
      <p className="font-semibold">{days}</p>
      <p>{time}</p>
    </div>
  );
}

function Buttons({ existing = true }: { existing?: boolean }) {
  return (
    <div className="mt-[25px] flex flex-col items-center">
      <a className="flex items-center justify-center w-[296px] h-[55px] pb-[2px] rounded-full bg-[#b81a30] text-white text-[20px] font-medium">
        New Patient Appointment
      </a>
      {existing && (
        <a className="mt-[13px] flex items-center justify-center w-[328px] h-[55px] pb-[2px] rounded-full bg-white border-2 border-[#b81a30] text-[#b81a30] text-[20px]">
          Existing Patient Appointment
        </a>
      )}
    </div>
  );
}

function LocationCard({
  map,
  name,
  practice,
  street,
  city,
  children,
}: {
  map: React.ReactNode;
  name: string;
  practice: string;
  street: string;
  city: string;
  children: React.ReactNode;
}) {
  return (
    <div className="bg-white w-[435px] px-[37px] h-[752px] overflow-hidden">
      {map}
      <h2 className="mt-[12px] text-[32px] leading-[36px] font-semibold text-[#222]">{name}</h2>
      <h3 className="mt-[12px] text-[20px] leading-[22px] font-semibold text-[#333]">{practice}</h3>
      <div className="mt-[13px] text-[20px] leading-[30px] text-[#555]">
        <p>{street}</p>
        <p>{city}</p>
        <p>United States</p>
      </div>
      {children}
    </div>
  );
}

function NavItem({ label }: { label: string }) {
  return (
    <div className="flex items-center mr-[23px]">
      <span>{label}</span>
      <span className="ml-[10px] w-0 h-0 border-x-[6.5px] border-x-transparent border-t-[7px] border-t-[#555] mt-[3px]" />
    </div>
  );
}

function HeaderCell({ w, icon, label, labelClass }: { w: string; icon: React.ReactNode; label: string; labelClass?: string }) {
  return (
    <div className={`flex flex-col items-center pt-[28px] h-full border-l border-[#f0dde1] ${w}`}>
      <div className="h-[36px] flex items-end justify-center">{icon}</div>
      <span className={`mt-[7px] text-[20px] leading-[30px] text-[#555] ${labelClass ?? ""}`}>{label}</span>
    </div>
  );
}

function SiteHeader() {
  return (
    <header className="relative z-10 flex items-center h-[133px] bg-white rounded-tl-[8px] shadow-[0_8px_24px_rgba(0,0,0,0.06)] shrink-0">
      <div className="flex items-start w-[388px] pl-[62px]">
        <svg width="67" height="73" viewBox="50 60 200 220" className="shrink-0">
          <HeartMark />
        </svg>
        <div className="ml-[13px] pt-[14px] w-[135px]">
          <div className="text-[33px] leading-[28px] font-black tracking-[4px] text-[#b81a30] font-['Roboto',sans-serif] border-b-2 border-[#bbb] whitespace-nowrap overflow-hidden">AGAPE</div>
          <div className="mt-[1px] text-[14px] leading-[16px] tracking-[2.2px] text-[#808080] font-['Lato',sans-serif] whitespace-nowrap">FAMILY HEALTH</div>
        </div>
      </div>
      <nav className="flex items-center mb-[1px] text-[20.5px] text-[#555] font-light">
        <NavItem label="About" />
        <NavItem label="Services" />
        <span className="mr-[18px] text-[#b81a30]">Locations</span>
        <NavItem label="For Patients" />
        <NavItem label="Careers" />
        <NavItem label="News" />
        <NavItem label="Giving" />
      </nav>
      <div className="ml-auto flex items-stretch h-full">
        <HeaderCell
          w="w-[154px]"
          label="Patient Portal"
          icon={
            <svg width="30" height="32" viewBox="0 0 30 32" fill="none" stroke={RED} strokeWidth="1.6">
              <circle cx="15" cy="9" r="8" />
              <path d="M1 31 V28 C1 22 6 19 11 19 H19 C24 19 29 22 29 28 V31Z" />
            </svg>
          }
        />
        <HeaderCell
          w="w-[147px]"
          label="Appointment"
          icon={
            <svg width="32" height="30" viewBox="0 0 32 30" fill="none" stroke={RED} strokeWidth="1.5">
              <rect x="1" y="3" width="30" height="26" rx="2" />
              <path d="M1 9 H31 M8 0 V5 M24 0 V5" />
              <path d="M6 14 H26 M6 18 H26 M6 22 H26 M6 25.5 H26" strokeWidth="2.4" strokeDasharray="2.2 1.6" />
            </svg>
          }
        />
        <HeaderCell
          w="w-[134px]"
          label="Pay Now"
          labelClass="mt-[8px]"
          icon={
            <svg width="28" height="32" viewBox="0 0 28 32" fill="none" stroke={RED} strokeWidth="1">
              <circle cx="15" cy="14" r="7.5" />
              <text x="15" y="17.5" fontSize="10" fill={RED} stroke="none" textAnchor="middle">$</text>
              <path d="M15 1 V4 M10 2 L11 4.5 M20 2 L19 4.5" />
              <path d="M1 24 H6 V31 H1Z M6 25 C9 23 12 23 15 25 H18 C19 26 18 27 17 27 H13 M18 26 L26 22 C27 23 27 24 26 25 L17 30 H6" />
            </svg>
          }
        />
        <div className="w-[122px] border-l border-[#f0dde1] pl-[18px] pt-[52px]">
          <Search size={28} strokeWidth={1.3} color={RED} />
        </div>
      </div>
    </header>
  );
}

function Page() {
  return (
    <div className="flex flex-col w-[1842px] ml-[4px] h-full overflow-hidden bg-[#f2f4f6] font-['Inter',sans-serif] rounded-bl-[8px]">
      <SiteHeader />
      <div className="flex pl-[14px] gap-[25.4px] overflow-hidden">
        <LocationCard map={<SouthsideMap />} name="Southside" practice="Family Practice" street="3900-2 University Blvd South" city="Jacksonville Florida, 32216">
          <Buttons />
        </LocationCard>
        <LocationCard map={<NorthsideMap />} name="Northside" practice="Family Practice, Women’s Health and Pharmacy" street="1680 Dunn Avenue, Suite 35-38B" city="Jacksonville Florida, 32218">
          <Hours title="Office Hours" days="Monday – Friday:" time="8AM – 5PM" />
          <Hours title="Office Hours" days="Monday – Friday:" time="7:30AM – 5PM" />
          <Buttons />
        </LocationCard>
        <LocationCard map={<DowntownMap />} name="Downtown" practice="Family Practice and Pharmacy" street="120 King Street" city="Jacksonville Florida, 32204">
          <Hours title="Office Hours" days="Monday – Friday:" time="8AM – 5PM" />
          <Buttons />
        </LocationCard>
        <LocationCard map={<WestsideMap />} name="Westside" practice="Family Practice" street="5460 Blanding Blvd" city="Jacksonville Florida, 32244">
          <Hours title="Office Hours" days="Monday – Friday:" time="7:30AM – 5PM" />
          <div className="h-[48px]" />
          <Buttons />
        </LocationCard>
      </div>
    </div>
  );
}

function Scrollbar() {
  return (
    <div className="flex flex-col items-center w-[20px] h-full bg-[#f5f5f5]">
      <span className="mt-[10px] w-0 h-0 border-x-[6px] border-x-transparent border-b-[9px] border-b-[#8e8e8e]" />
      <div className="mt-[149px] w-[11px] h-[132px] rounded-full bg-[#8e8e8e]" />
      <span className="mt-auto mb-[10px] w-0 h-0 border-x-[6px] border-x-transparent border-t-[9px] border-t-[#8e8e8e]" />
    </div>
  );
}

function SideRail() {
  return (
    <div className="flex flex-col items-center w-[54px] h-full bg-[#f7f7f7] rounded-br-[8px]">
      <div className="mt-[23px] scale-125">
        <TabIcon kind="copilot" />
      </div>
      <div className="mt-[30px] scale-125">
        <TabIcon kind="mail" />
      </div>
      <span className="mt-[28px] w-[36px] h-px bg-[#c9c9c9]" />
      <Plus size={22} strokeWidth={1.4} className="mt-[27px] text-[#333]" />
      <span className="mt-auto w-[36px] h-px bg-[#c9c9c9]" />
      <Settings size={22} strokeWidth={1.4} className="mt-[16px] mb-[12px] text-[#222]" />
    </div>
  );
}

function Taskbar() {
  return (
    <div className="flex items-center h-[60px] border-t border-[#e0cdb8] bg-gradient-to-r from-[#fde1c3] via-[#f9dccf] to-[#fce1c4] font-['Open_Sans',sans-serif] shrink-0">
      <svg width="30" height="30" viewBox="0 0 30 30" className="ml-[25px] shrink-0">
        <rect width="14" height="14" fill="#29b6f6" />
        <rect x="16" width="14" height="14" fill="#2aa5ee" />
        <rect y="16" width="14" height="14" fill="#1e8fe0" />
        <rect x="16" y="16" width="14" height="14" fill="#1479d0" />
      </svg>
      <div className="ml-[18px] flex items-center w-[272px] h-[39px] rounded-full bg-[#fef5ea] border border-[#efe1d0]">
        <Search size={21} strokeWidth={1.7} className="ml-[13px] text-[#222]" />
        <span className="ml-[11px] text-[15px] text-[#555]">Search</span>
        <div className="ml-auto flex items-center justify-center w-[67px] h-[37px] rounded-full bg-[#f1ece4]">
          <Briefcase />
        </div>
      </div>
      <div className="ml-[18px] relative w-[26px] h-[30px] shrink-0">
        <span className="absolute left-0 bottom-0 w-[23px] h-[22px] rounded-[2px] bg-[#2b2b2b]" />
        <span className="absolute right-0 top-0 w-[22px] h-[22px] rounded-[2px] bg-[#f0f0f0]/90 shadow-sm" />
      </div>
      <svg width="30" height="34" viewBox="0 0 30 34" className="ml-[27px] shrink-0">
        <path d="M15 1 C24 1 29 8 29 16 C29 25 22 31 12 31 L4 33 L5 27 C2 24 1 20 1 16 C1 8 6 1 15 1Z" fill="#6c5ed6" />
        <rect x="8" y="11" width="10" height="11" rx="2" fill="#fff" />
        <path d="M19 14 L23 12 V21 L19 19Z" fill="#fff" />
      </svg>
      <svg width="30" height="30" viewBox="0 0 30 30" className="ml-[27px] shrink-0">
        <path d="M0 2 H12 L15 6 H30 V30 H0Z" fill="#e8a317" />
        <rect y="7" width="30" height="23" fill="#fcd34d" />
        <rect x="9" y="21" width="12" height="3" fill="#1a6fb8" />
      </svg>
      <div className="ml-[16px] relative flex items-center justify-center w-[46px] h-[48px] rounded-[4px] bg-[#fbefe6] shrink-0">
        <svg width="32" height="32" viewBox="0 0 32 32">
          <path d="M16 1 C25 1 31 8 31 16 C31 21 26 22 22 20 C25 15 20 10 14 10 C8 10 3 15 2 20 C1 10 7 1 16 1Z" fill="#2fc2a0" />
          <path d="M2 20 C3 14 8 10 14 10 C10 14 11 24 18 28 C22 30 26 29 28 27 C24 31 18 32 13 30 C7 29 2 25 2 20Z" fill="#1a76cf" />
        </svg>
        <span className="absolute left-[5px] bottom-[7px]">
          <Briefcase small />
        </span>
        <span className="absolute bottom-[1px] w-[20px] h-[4px] rounded-full bg-[#0a6fd0]" />
      </div>
      <svg width="28" height="30" viewBox="0 0 28 30" className="ml-[17px] shrink-0">
        <path d="M8 7 V3 H20 V7" fill="none" stroke="#1d9bd6" strokeWidth="2" />
        <rect y="6" width="28" height="24" rx="3" fill="#154c82" />
        <rect x="8" y="11" width="5" height="5" fill="#f25022" />
        <rect x="15" y="11" width="5" height="5" fill="#7fba00" />
        <rect x="8" y="18" width="5" height="5" fill="#00a4ef" />
        <rect x="15" y="18" width="5" height="5" fill="#ffb900" />
      </svg>
      <TaskApp className="ml-[27px]" dot>
        <svg width="28" height="32" viewBox="0 0 28 32" className="font-['Liberation_Sans',sans-serif]">
          <circle cx="16" cy="4" r="3.4" fill="#7b83eb" />
          <rect x="11" y="8" width="16" height="18" rx="2" fill="#7b83eb" />
          <rect y="8" width="16" height="16" rx="1" fill="#4b53bc" />
          <text x="8" y="20" fontSize="12" fill="#fff" fontWeight="700" textAnchor="middle">T</text>
          <rect x="7" y="22" width="21" height="10" fill="#19e0d8" />
          <text x="17.5" y="30.5" fontSize="8" fontWeight="700" textAnchor="middle" fill="#111">NEW</text>
        </svg>
      </TaskApp>
      <TaskApp className="ml-[27px]" dot>
        <svg width="28" height="30" viewBox="0 0 28 30" className="font-['Liberation_Sans',sans-serif]">
          <rect x="6" width="22" height="30" rx="1" fill="#2b7cd3" />
          <rect x="6" width="22" height="8" fill="#41a5ee" />
          <rect x="6" y="22" width="22" height="8" fill="#103f91" />
          <rect y="7" width="16" height="16" rx="1" fill="#185abd" />
          <text x="8" y="20" fontSize="12" fill="#fff" fontWeight="700" textAnchor="middle">W</text>
        </svg>
      </TaskApp>
      <TaskApp className="ml-[27px]" dot>
        <svg width="28" height="30" viewBox="0 0 28 30" className="font-['Liberation_Sans',sans-serif]">
          <rect x="6" width="22" height="30" rx="1" fill="#21a366" />
          <rect x="17" width="11" height="15" fill="#33c481" />
          <rect x="6" y="15" width="11" height="15" fill="#107c41" />
          <rect y="7" width="16" height="16" rx="1" fill="#107c41" />
          <text x="8" y="20" fontSize="12" fill="#fff" fontWeight="700" textAnchor="middle">X</text>
        </svg>
      </TaskApp>

      <div className="ml-auto flex items-center text-[#222]">
        <ChevronUp size={22} strokeWidth={1.6} />
        <svg width="22" height="14" viewBox="0 0 22 14" className="ml-[19px]">
          <path d="M5 14 C1 14 0 10 2 8 C3 6 5 6 6 6 C7 2 12 0 15 3 C17 3 20 5 20 8 L22 11 C22 13 20 14 19 14Z" fill="#1f8ad6" />
        </svg>
        <Wifi size={23} strokeWidth={1.6} className="ml-[17px]" />
        <Volume1 size={24} strokeWidth={1.3} className="ml-[7px]" />
        <BatteryCharging size={24} strokeWidth={1.4} className="ml-[7px]" />
        <div className="ml-[11px] w-[76px] text-right text-[14px] leading-[20px] whitespace-nowrap">
          <p>7:12 AM</p>
          <p>3/12/2024</p>
        </div>
        <Bell size={20} fill="#0a3f9c" color="#0a3f9c" className="ml-[10px] mr-[25px]" />
      </div>
    </div>
  );
}

function Briefcase({ small }: { small?: boolean }) {
  const s = small ? 18 : 30;
  return (
    <svg width={s} height={s} viewBox="0 0 30 30">
      <path d="M10 8 V3 H20 V8" fill="none" stroke="#333" strokeWidth="2" />
      <rect y="7" width="30" height="21" rx="2" fill="#b96b0a" />
      <rect y="18" width="30" height="10" fill="#93500a" />
      <rect x="12" y="13" width="6" height="8" fill="#f6c945" />
    </svg>
  );
}

function TaskApp({ className, dot, children }: { className: string; dot?: boolean; children: React.ReactNode }) {
  return (
    <div className={`relative flex items-center justify-center w-[28px] h-[32px] shrink-0 ${className}`}>
      {children}
      {dot && <span className="absolute -bottom-[8px] w-[6px] h-[6px] rounded-full bg-[#777]" />}
    </div>
  );
}

export default function App() {
  return (
    <div className="flex flex-col w-[1920px] h-[1080px] overflow-hidden bg-[#f7f7f7] font-['Open_Sans',sans-serif]">
      <TabBar />
      <Toolbar />
      <Bookmarks />
      <div className="flex h-[885px] shrink-0">
        <Page />
        <Scrollbar />
        <SideRail />
      </div>
      <div className="h-[5px] bg-[#f3efea] shrink-0" />
      <Taskbar />
    </div>
  );
}
